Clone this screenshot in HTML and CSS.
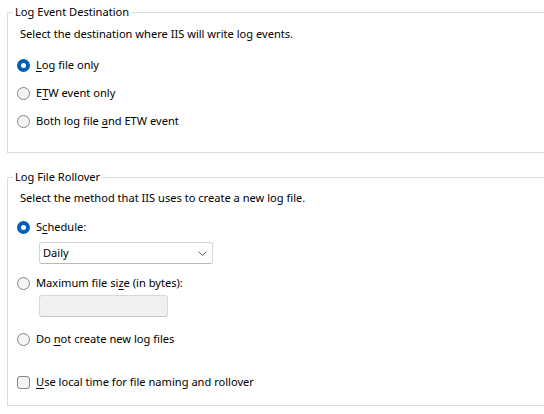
FILE: index.html
```html
<!DOCTYPE html>
<html>
<head>
    <title>Logging Settings</title>
    <link rel="stylesheet" href="styles.css">
</head>
<body>
    <div class="page">
        <fieldset class="group group-dest">
            <legend>Log Event Destination</legend>
            <div class="hint">Select the destination where IIS will write log events.</div>

            <label class="option">
                <input type="radio" name="dest" checked>
                <span><u>L</u>og file only</span>
            </label>
            <label class="option">
                <input type="radio" name="dest">
                <span>E<u>T</u>W event only</span>
            </label>
            <label class="option">
                <input type="radio" name="dest">
                <span>Both log file <u>a</u>nd ETW event</span>
            </label>
        </fieldset>

        <fieldset class="group group-rollover">
            <legend>Log File Rollover</legend>
            <div class="hint">Select the method that IIS uses to create a new log file.</div>

            <label class="option">
                <input type="radio" name="rollover" checked>
                <span>S<u>c</u>hedule:</span>
            </label>
            <div class="select">
                <span>Daily</span>
                <svg width="9" height="5" viewBox="0 0 9 5"><path d="M0.5 0.5 L4.5 4.5 L8.5 0.5" fill="none" stroke="#606060" stroke-width="1"/></svg>
            </div>

            <label class="option option-size">
                <input type="radio" name="rollover">
                <span>Maximum file si<u>z</u>e (in bytes):</span>
            </label>
            <div class="textbox"></div>

            <label class="option option-none">
                <input type="radio" name="rollover">
                <span>Do <u>n</u>ot create new log files</span>
            </label>

            <label class="option option-check">
                <input type="checkbox">
                <span><u>U</u>se local time for file naming and rollover</span>
            </label>
        </fieldset>
    </div>
</body>
</html>
```

FILE: styles.css
```css
html, body {
    margin: 0;
    padding: 0;
    background-color: #fff;
    overflow: hidden;
}

body {
    font-family: "Noto Sans", "Open Sans", sans-serif;
    font-size: 11.1px;
    line-height: 16px;
    color: #000;
}

.page {
    padding: 4px 0 0 7px;
    width: 560px;
}

.group {
    margin: 0;
    padding: 0 0 0 9px;
    border: 1px solid #dcdcdc;
    min-width: 0;
}

.group legend {
    margin-left: -4px;
    padding: 0 2px;
    line-height: 16px;
}

.group-dest {
    padding-bottom: 23px;
}

.group-rollover {
    margin-top: 16px;
    padding-bottom: 15px;
}

.hint {
    margin: 6px 0 0 3px;
}

.group-rollover .hint {
    margin-top: 5px;
}

.option {
    display: flex;
    align-items: center;
    gap: 6px;
    height: 16px;
    margin-top: 13px;
}

.group-dest .option:first-of-type {
    margin-top: 15px;
}

.group-dest .option + .option {
    margin-top: 12px;
}

.option-size {
    margin-top: 11px;
}

.option-none {
    margin-top: 14px;
}

.option-check {
    margin-top: 27px;
}

.option u {
    text-decoration-thickness: 1px;
    text-underline-offset: 2px;
}

input[type="radio"],
input[type="checkbox"] {
    appearance: none;
    margin: 0;
    width: 13px;
    height: 13px;
    flex: none;
    box-sizing: border-box;
    border: 1px solid #858585;
    background-color: #f4f4f4;
}

input[type="radio"] {
    border-radius: 50%;
}

input[type="radio"]:checked {
    border: 4px solid #005fb8;
    background-color: #fff;
}

input[type="checkbox"] {
    border-radius: 3px;
}

.select {
    display: flex;
    align-items: center;
    justify-content: space-between;
    box-sizing: border-box;
    width: 174px;
    height: 22px;
    margin: 7px 0 0 22px;
    padding: 0 5px 0 3px;
    border: 1px solid #d4d4d4;
    border-bottom-color: #b8b8b8;
    border-radius: 3px;
    background-color: #fff;
}

.textbox {
    box-sizing: border-box;
    width: 129px;
    height: 22px;
    margin: 4px 0 0 22px;
    border: 1px solid #d8d8d8;
    border-bottom-color: #c4c4c4;
    border-radius: 3px;
    background-color: #f0f0f0;
}
```
